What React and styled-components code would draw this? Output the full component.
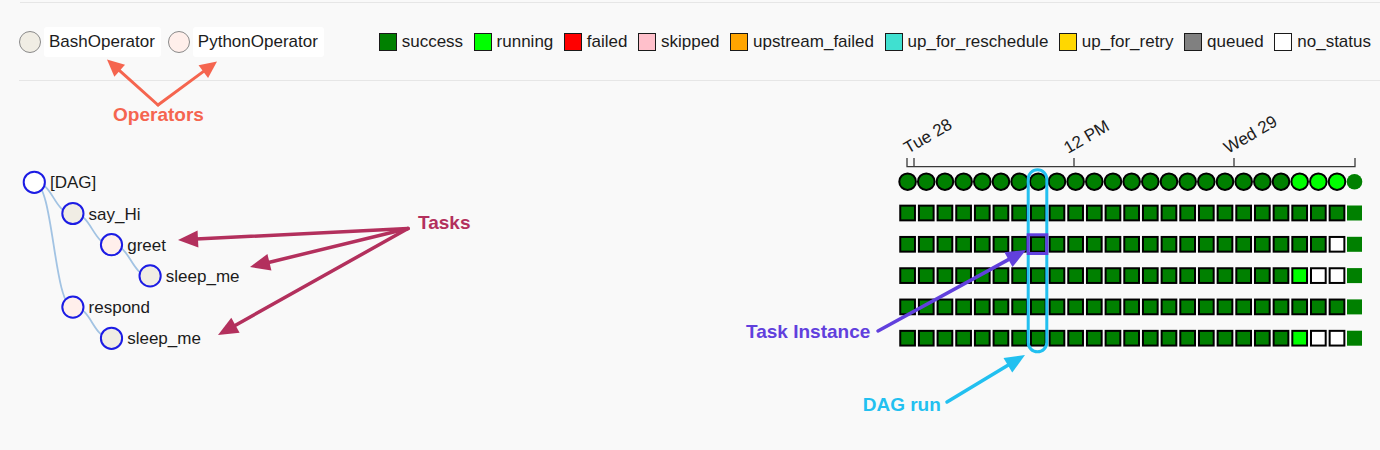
import React from 'react';
import styled, { createGlobalStyle } from 'styled-components';

const BASH = '#f0ede4';
const PYTHON = '#ffefeb';

const GlobalStyle = createGlobalStyle`
  html, body {
    margin: 0;
    padding: 0;
    background: #f9f9f9;
  }
  body {
    font-family: "Liberation Sans", Arial, sans-serif;
    color: #1c1c1c;
  }
`;

const Page = styled.div`
  position: relative;
  width: 1380px;
  height: 450px;
  overflow: hidden;
`;

const TopRule = styled.div`
  margin-left: 20px;
  height: 2px;
  border-bottom: 1px solid #e6e6e6;
`;

const Legend = styled.div`
  display: flex;
  align-items: center;
  height: 77px;
  margin-left: 19px;
  padding-right: 9px;
  border-bottom: 1px solid #e6e6e6;
`;

const OperatorItem = styled.div`
  display: flex;
  align-items: center;
  margin-right: 7px;
`;

const OpCircle = styled.span`
  width: 20px;
  height: 20px;
  border: 1.5px solid #8a8a8a;
  border-radius: 50%;
  background: ${({ color }) => color};
`;

const OpLabel = styled.span`
  margin-left: 3px;
  padding: 0 6px 0 5px;
  height: 30px;
  line-height: 30px;
  background: #fff;
  border-radius: 3px;
  font-size: 17px;
`;

const StatusLegend = styled.div`
  display: flex;
  align-items: center;
  gap: 10.5px;
  margin-left: auto;
`;

const StatusItem = styled.div`
  display: flex;
  align-items: center;
  font-size: 17px;
`;

const Swatch = styled.span`
  width: 16px;
  height: 16px;
  margin-right: 5px;
  border: 1px solid #1a1a1a;
  background: ${({ color }) => color};
`;

const Main = styled.div`
  display: flex;
  justify-content: space-between;
  height: 369px;
`;

const TreeSvg = styled.svg`
  display: block;
`;

const ChartSvg = styled.svg`
  display: block;
`;

const Overlay = styled.svg`
  position: absolute;
  top: 0;
  left: 0;
  pointer-events: none;
`;

const NodeLabel = styled.text`
  font-family: "Liberation Sans", Arial, sans-serif;
  font-size: 17px;
  fill: #1c1c1c;
`;

const AxisLabel = styled.text`
  font-family: "Liberation Sans", Arial, sans-serif;
  font-size: 17px;
  fill: #1c1c1c;
`;

const Note = styled.text`
  font-family: "Liberation Sans", Arial, sans-serif;
  font-size: 19px;
  font-weight: bold;
  fill: ${({ color }) => color};
`;

const STATUSES = [
  ['success', '#008000'],
  ['running', '#00ff00'],
  ['failed', '#ff0000'],
  ['skipped', '#ffc0cb'],
  ['upstream_failed', '#ffa500'],
  ['up_for_reschedule', '#40e0d0'],
  ['up_for_retry', '#ffd700'],
  ['queued', '#808080'],
  ['no_status', '#ffffff'],
];

const TREE = [
  { id: 'dag', label: '[DAG]', depth: 0, row: 0, fill: '#fff' },
  { id: 'say', label: 'say_Hi', depth: 1, row: 1, fill: BASH, parent: 'dag' },
  { id: 'greet', label: 'greet', depth: 2, row: 2, fill: PYTHON, parent: 'say' },
  { id: 'sleep1', label: 'sleep_me', depth: 3, row: 3, fill: BASH, parent: 'greet' },
  { id: 'respond', label: 'respond', depth: 1, row: 4, fill: PYTHON, parent: 'dag' },
  { id: 'sleep2', label: 'sleep_me', depth: 2, row: 5, fill: BASH, parent: 'respond' },
];

const nodeX = (d) => 34.3 + d * 38.6;
const nodeY = (r) => 182.3 + r * 31.2;

const COLS = 24;
const colX = (i) => 907.6 + i * 18.67;
const rowY = (r) => 181.7 + r * 31.3;

const GREEN = '#008000';
const LIME = '#00ff00';
const WHITE = '#ffffff';

const runs = Array.from({ length: COLS }, (_, i) => (i >= 21 ? LIME : GREEN));
const allDone = Array.from({ length: COLS }, () => GREEN);
const lastOpen = Array.from({ length: COLS }, (_, i) => (i === 23 ? WHITE : GREEN));
const tailRunning = Array.from({ length: COLS }, (_, i) => (i === 21 ? LIME : i > 21 ? WHITE : GREEN));
const taskRows = [allDone, lastOpen, tailRunning, allDone, tailRunning];

const TICKS = [
  { x: 914, label: 'Tue 28' },
  { x: 1074, label: '12 PM' },
  { x: 1234, label: 'Wed 29' },
];

function Arrow({ from, to, color, width = 3, hl = 18, hw = 8 }) {
  const [x1, y1] = from;
  const [x2, y2] = to;
  const len = Math.hypot(x2 - x1, y2 - y1);
  const ux = (x2 - x1) / len;
  const uy = (y2 - y1) / len;
  const bx = x2 - ux * hl;
  const by = y2 - uy * hl;
  const head = [
    [x2, y2],
    [bx - uy * hw, by + ux * hw],
    [bx + uy * hw, by - ux * hw],
  ]
    .map((p) => p.join(','))
    .join(' ');
  return (
    <g>
      <line x1={x1} y1={y1} x2={bx + ux * 2} y2={by + uy * 2} stroke={color} strokeWidth={width} strokeLinecap="round" />
      <polygon points={head} fill={color} />
    </g>
  );
}

function DagTree() {
  const byId = Object.fromEntries(TREE.map((n) => [n.id, n]));
  return (
    <TreeSvg width="480" height="369" viewBox="0 81 480 369">
      {TREE.filter((n) => n.parent).map((n) => {
        const p = byId[n.parent];
        const sx = nodeX(p.depth);
        const sy = nodeY(p.row);
        const tx = nodeX(n.depth);
        const ty = nodeY(n.row);
        const mx = (sx + tx) / 2;
        return (
          <path
            key={n.id}
            d={`M${sx},${sy} C${mx},${sy} ${mx},${ty} ${tx},${ty}`}
            fill="none"
            stroke="#a2c3e3"
            strokeWidth="1.8"
          />
        );
      })}
      {TREE.map((n) => (
        <g key={n.id}>
          <circle cx={nodeX(n.depth)} cy={nodeY(n.row)} r="10.6" fill={n.fill} stroke="#1c1ce4" strokeWidth="2" />
          <NodeLabel x={nodeX(n.depth) + 15.7} y={nodeY(n.row) + 6}>
            {n.label}
          </NodeLabel>
        </g>
      ))}
    </TreeSvg>
  );
}

function GridChart() {
  return (
    <ChartSvg width="500" height="369" viewBox="880 81 500 369">
      <path d="M907,158 V166.7 H1355 V158" fill="none" stroke="#3a3a3a" strokeWidth="1.3" />
      {TICKS.map((t) => (
        <g key={t.label}>
          <line x1={t.x} y1="158" x2={t.x} y2="166.7" stroke="#3a3a3a" strokeWidth="1.3" />
          <AxisLabel x={t.x - 6} y="154" transform={`rotate(-30 ${t.x - 6} 154)`}>
            {t.label}
          </AxisLabel>
        </g>
      ))}
      {runs.map((c, i) => (
        <circle key={i} cx={colX(i)} cy={rowY(0)} r="8.3" fill={c} stroke="#000" strokeWidth="2" />
      ))}
      <circle cx="1354.5" cy={rowY(0)} r="7.8" fill={GREEN} />
      {taskRows.map((row, r) => (
        <g key={r}>
          {row.map((c, i) => (
            <rect
              key={i}
              x={colX(i) - 7.35}
              y={rowY(r + 1) - 7.35}
              width="14.7"
              height="14.7"
              fill={c}
              stroke="#000"
              strokeWidth="2"
            />
          ))}
          <rect x="1347" y={rowY(r + 1) - 7.5} width="15" height="15" fill={GREEN} />
        </g>
      ))}
    </ChartSvg>
  );
}

function Annotations() {
  const coral = '#f5654f';
  const crimson = '#b3305d';
  const purple = '#6140dd';
  const cyan = '#22c0f0';
  return (
    <Overlay width="1380" height="450" viewBox="0 0 1380 450">
      <Arrow from={[158, 105]} to={[107, 59.5]} color={coral} width={3} hl={17} hw={8} />
      <Arrow from={[158, 105]} to={[217, 61.5]} color={coral} width={3} hl={17} hw={8} />
      <Note x="158.5" y="121" textAnchor="middle" color={coral}>Operators</Note>

      <Arrow from={[408, 228.5]} to={[178, 240]} color={crimson} width={3.5} hl={20} hw={8.5} />
      <Arrow from={[408, 228.5]} to={[250, 267]} color={crimson} width={3.5} hl={20} hw={8.5} />
      <Arrow from={[408, 228.5]} to={[218, 335]} color={crimson} width={3.5} hl={20} hw={8.5} />
      <Note x="418" y="229" color={crimson}>Tasks</Note>

      <rect x="1028.2" y="169.8" width="18.6" height="182" rx="9.3" fill="none" stroke={cyan} strokeWidth="3" />
      <rect x="1028.2" y="234.8" width="18.6" height="18.7" fill="none" stroke={purple} strokeWidth="3" />

      <Arrow from={[878, 331]} to={[1026, 250]} color={purple} width={3.5} hl={20} hw={8.5} />
      <Note x="746" y="337.5" color={purple}>Task Instance</Note>

      <Arrow from={[947, 402]} to={[1025, 355]} color={cyan} width={3.5} hl={20} hw={8.5} />
      <Note x="862.7" y="411" color={cyan}>DAG run</Note>
    </Overlay>
  );
}

export default function App() {
  return (
    <Page>
      <GlobalStyle />
      <TopRule />
      <Legend>
        <OperatorItem>
          <OpCircle color={BASH} />
          <OpLabel>BashOperator</OpLabel>
        </OperatorItem>
        <OperatorItem>
          <OpCircle color={PYTHON} />
          <OpLabel>PythonOperator</OpLabel>
        </OperatorItem>
        <StatusLegend>
          {STATUSES.map(([name, color]) => (
            <StatusItem key={name}>
              <Swatch color={color} />
              {name}
            </StatusItem>
          ))}
        </StatusLegend>
      </Legend>
      <Main>
        <DagTree />
        <GridChart />
      </Main>
      <Annotations />
    </Page>
  );
}
